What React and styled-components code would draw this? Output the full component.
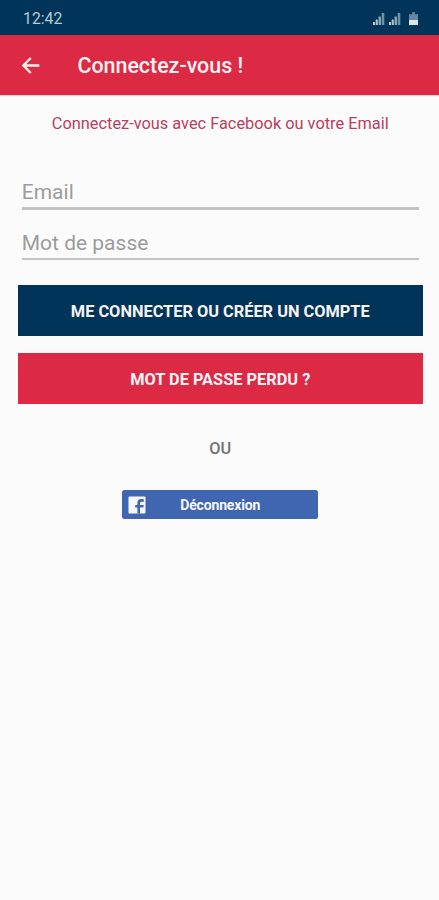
import React from "react";
import styled, { createGlobalStyle } from "styled-components";

const GlobalStyle = createGlobalStyle`
  * { box-sizing: border-box; }
  body { margin: 0; background: #fbfbfb; font-family: Roboto, "Noto Sans", sans-serif; }
`;

const Screen = styled.div`
  display: flex;
  flex-direction: column;
  height: 900px;
  overflow: hidden;
  background: #fbfbfb;
`;

const StatusBar = styled.div`
  display: flex;
  align-items: center;
  justify-content: space-between;
  height: 35px;
  padding: 2px 20px 0 23px;
  background: #003559;
`;

const Clock = styled.span`
  color: #b9cbd6;
  font-size: 15.8px;
  line-height: 18px;
`;

const StatusIcons = styled.svg`
  display: block;
  width: 48px;
  height: 16px;
`;

const AppBar = styled.header`
  display: flex;
  align-items: center;
  gap: 36.5px;
  height: 60px;
  padding: 1px 21px 0;
  background: #dc2a44;
  box-shadow: 0 1px 1px #f1ced3;
`;

const BackButton = styled.button`
  display: flex;
  padding: 0;
  border: 0;
  background: none;
`;

const Title = styled.h1`
  margin: 0;
  padding-top: 1px;
  color: #fff3f3;
  font-size: 21.4px;
  font-weight: 500;
  line-height: 26px;
  white-space: nowrap;
`;

const Content = styled.main`
  display: flex;
  flex-direction: column;
  align-items: center;
  padding: 18px 16px 0 17.5px;
`;

const Intro = styled.p`
  margin: 0 0 41px;
  color: #b93f5c;
  font-size: 16.35px;
  line-height: 22px;
  white-space: nowrap;
`;

const Field = styled.input`
  display: block;
  width: 397px;
  height: ${(p) => p.$height}px;
  margin: 0 0 ${(p) => p.$gap}px;
  padding: ${(p) => p.$pad}px 0 0;
  border: 0;
  border-bottom: ${(p) => p.$line}px solid #c3c3c3;
  border-radius: 0;
  outline: 0;
  background: transparent;
  font: 400 21px/26px Roboto, sans-serif;
  &::placeholder { color: #9c9c9c; opacity: 1; }
`;

const ActionButton = styled.button`
  width: 405px;
  height: 51.5px;
  margin: 0 0 16.5px;
  padding: 3px 0 0;
  border: 0;
  background: ${(p) => p.$color};
  color: #f6f4f6;
  font: 700 16.35px/20px Roboto, sans-serif;
  white-space: nowrap;
`;

const Divider = styled.span`
  margin: 18px 0 31px;
  color: #727272;
  font-size: 16.35px;
  font-weight: 500;
  line-height: 20px;
`;

const FacebookButton = styled.button`
  display: grid;
  grid-template-columns: 18px 1fr 18px;
  align-items: center;
  width: 196px;
  height: 29.5px;
  padding: 1px 6px 0;
  border: 0;
  border-radius: 2.5px;
  background: #4066b2;
  color: #f5f7fb;
  font: 700 14px/18px Roboto, sans-serif;
  letter-spacing: -0.15px;
`;

const bars = [0, 16];

export default function App() {
  return (
    <Screen>
      <GlobalStyle />
      <StatusBar>
        <Clock>12:42</Clock>
        <StatusIcons viewBox="0 0 48 16">
          {bars.map((x) => (
            <g key={x} transform={`translate(${x} 0)`} fill="#8ea9b8">
              <rect x="2" y="11" width="1.9" height="3" fill="#c5d3da" />
              <rect x="4.7" y="8.5" width="2.1" height="5.5" fill="#b0c3ce" />
              <rect x="7.6" y="5.5" width="2.3" height="8.5" />
              <rect x="10.7" y="2" width="2.6" height="12" fill="#6f91a5" />
            </g>
          ))}
          <path d="M40 3.2h1.3V1h2.6v2.2H47V9h-9V3.2z" fill="#6688a0" />
          <rect x="38" y="9" width="9" height="5" fill="#dce5e8" />
        </StatusIcons>
      </StatusBar>
      <AppBar>
        <BackButton aria-label="Retour">
          <svg width="20" height="18" viewBox="0 0 20 18" fill="none" stroke="#fff0ee" strokeWidth="2.3">
            <path d="M18.3 8.5H2.8M9.8 1 2.3 8.5l7.5 7.5" />
          </svg>
        </BackButton>
        <Title>Connectez-vous !</Title>
      </AppBar>
      <Content>
        <Intro>Connectez-vous avec Facebook ou votre Email</Intro>
        <Field $height={33.5} $line={3} $pad={1} $gap={17} placeholder="Email" />
        <Field $height={33} $line={2} $pad={1} $gap={25} type="password" placeholder="Mot de passe" />
        <ActionButton $color="#003559">ME CONNECTER OU CRÉER UN COMPTE</ActionButton>
        <ActionButton $color="#dc2a44">MOT DE PASSE PERDU ?</ActionButton>
        <Divider>OU</Divider>
        <FacebookButton>
          <svg width="18" height="18" viewBox="0 0 18 18">
            <rect x="0.5" y="0.5" width="17" height="17" rx="1" fill="#f5f7fb" />
            <path d="M12 17.5v-6h3.3l.5-2.5H12V7.3q0-1.5 1.6-1.5h2.2V3.3q-1.2-.2-2.4-.2-4 0-4 3.9v2H7.2v2.5h2.2v6z" fill="#4066b2" />
          </svg>
          <span>Déconnexion</span>
        </FacebookButton>
      </Content>
    </Screen>
  );
}
